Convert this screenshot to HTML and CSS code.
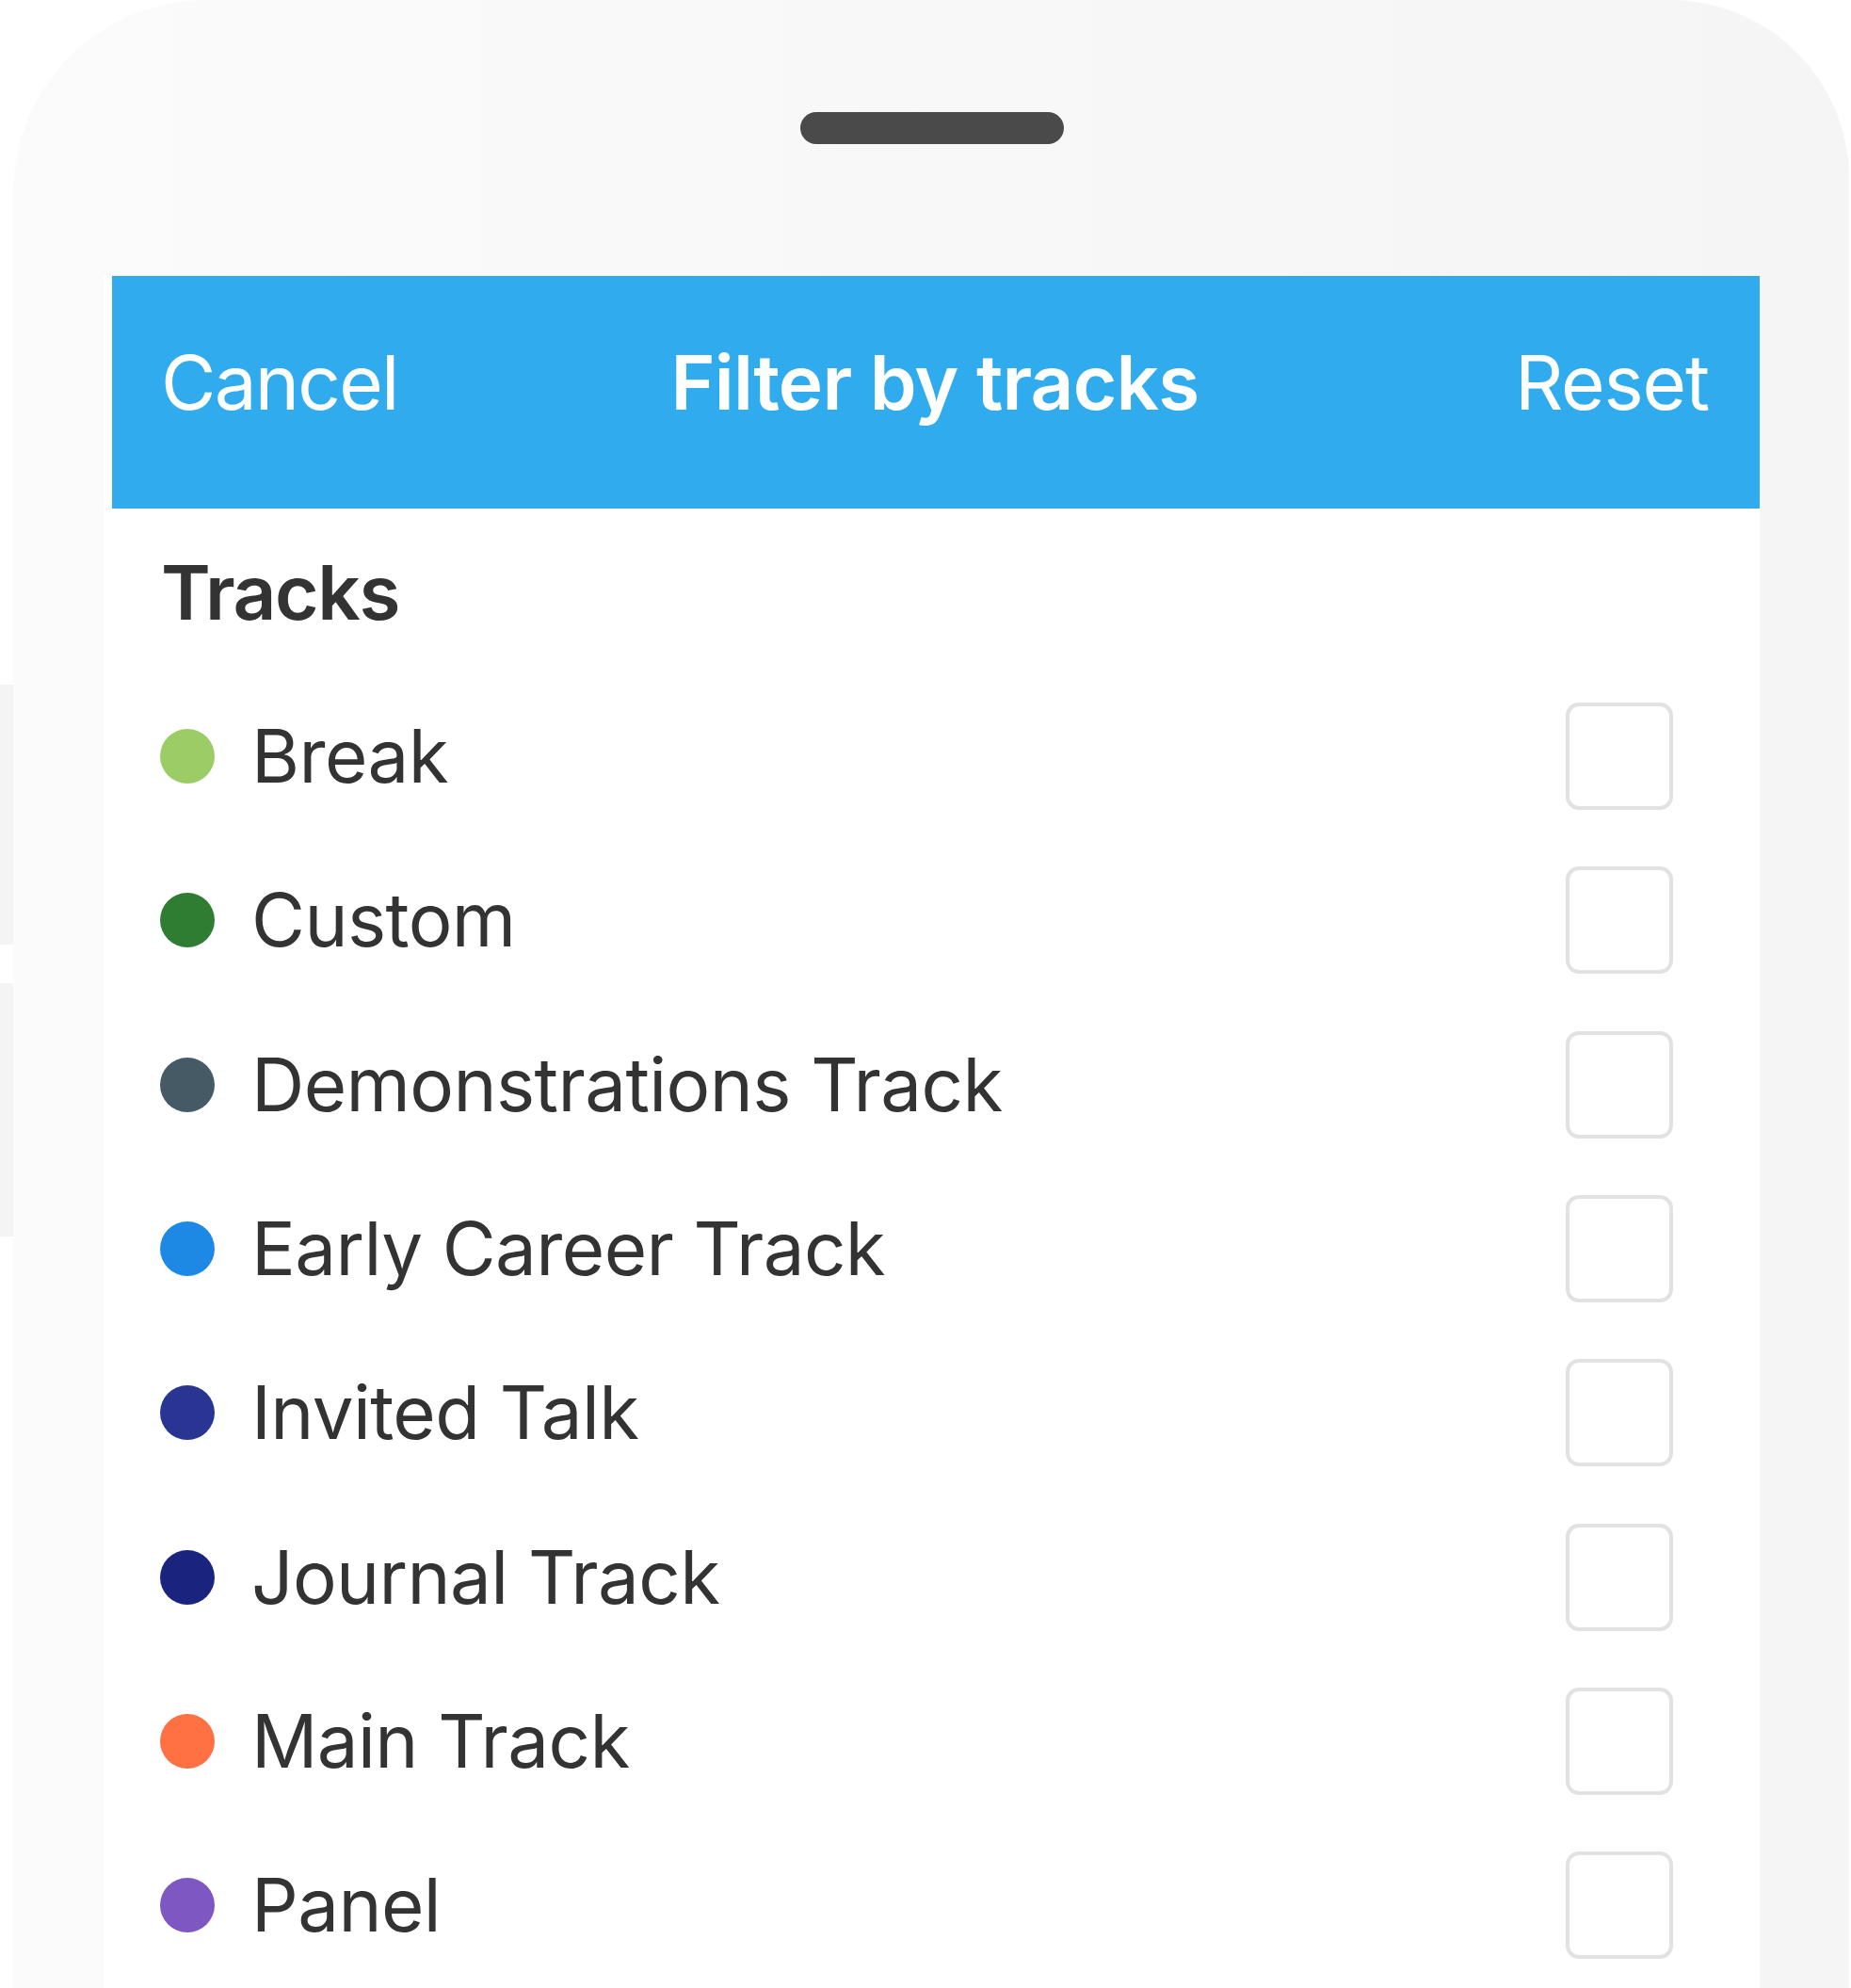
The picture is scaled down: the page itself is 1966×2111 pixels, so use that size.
FILE: index.html
```html
<!DOCTYPE html>
<html lang="en">

<head>
    <meta charset="UTF-8">
    <title>Filter by tracks</title>
    <link rel="stylesheet" href="styles.css">
</head>

<body>

    <!-- edges of the screens behind the phone -->
    <div class="behind behind-one"></div>
    <div class="behind behind-two"></div>

    <div class="phone">
        <div class="handle"></div>

        <div class="sheet">
            <div class="topbar">
                <span class="topbar-btn">Cancel</span>
                <span class="topbar-title">Filter by tracks</span>
                <span class="topbar-btn topbar-right">Reset</span>
            </div>

            <h2 class="section-title">Tracks</h2>

            <ul class="track-list">
                <li class="track">
                    <span class="dot dot-break"></span>
                    <span class="track-name">Break</span>
                    <span class="checkbox"></span>
                </li>
                <li class="track">
                    <span class="dot dot-custom"></span>
                    <span class="track-name">Custom</span>
                    <span class="checkbox"></span>
                </li>
                <li class="track">
                    <span class="dot dot-demo"></span>
                    <span class="track-name">Demonstrations Track</span>
                    <span class="checkbox"></span>
                </li>
                <li class="track">
                    <span class="dot dot-early"></span>
                    <span class="track-name">Early Career Track</span>
                    <span class="checkbox"></span>
                </li>
                <li class="track">
                    <span class="dot dot-invited"></span>
                    <span class="track-name">Invited Talk</span>
                    <span class="checkbox"></span>
                </li>
                <li class="track">
                    <span class="dot dot-journal"></span>
                    <span class="track-name">Journal Track</span>
                    <span class="checkbox"></span>
                </li>
                <li class="track">
                    <span class="dot dot-main"></span>
                    <span class="track-name">Main Track</span>
                    <span class="checkbox"></span>
                </li>
                <li class="track">
                    <span class="dot dot-panel"></span>
                    <span class="track-name">Panel</span>
                    <span class="checkbox"></span>
                </li>
            </ul>
        </div>
    </div>

</body>

</html>
```

FILE: styles.css
```css
body {
    font-family: 'Inter', 'Liberation Sans', sans-serif;
    background-color: #fff;
    margin: 0;
    padding: 0 2px 0 14px;
    height: 2111px;
    overflow: hidden;
    position: relative;
}

.behind {
    position: absolute;
    left: 0;
    width: 20px;
    background-color: #f4f4f4;
}

.behind-one {
    top: 727px;
    height: 276px;
}

.behind-two {
    top: 1044px;
    height: 269px;
}

.phone {
    position: relative;
    display: flex;
    flex-direction: column;
    height: 2111px;
    box-sizing: border-box;
    overflow: hidden;
    padding: 119px 95px 0 96px;
    background: linear-gradient(to right, #fbfbfb, #f5f5f5);
    border-radius: 205px 190px 0 0;
}

.handle {
    width: 280px;
    height: 34px;
    margin: 0 auto;
    border-radius: 17px;
    background-color: #4a4a4a;
}

.sheet {
    flex: 1;
    margin-top: 140px;
    background-color: #fff;
    overflow: hidden;
}

.topbar {
    display: grid;
    grid-template-columns: 1fr auto 1fr;
    align-items: center;
    height: 247px;
    box-sizing: border-box;
    margin-left: 9px;
    padding: 0 54px 22px 52px;
    background-color: #30abed;
    color: #fff;
    font-size: 80px;
    line-height: 1;
}

.topbar-btn {
    letter-spacing: -1.8px;
}

.topbar-right {
    text-align: right;
    letter-spacing: -1.2px;
}

.topbar-title {
    font-weight: 600;
    letter-spacing: -0.8px;
}

.section-title {
    margin: 49px 0 47px 0;
    padding-left: 61px;
    font-size: 80px;
    line-height: 1;
    font-weight: 600;
    letter-spacing: -1.4px;
    color: #333;
}

.track-list {
    list-style: none;
    margin: 0;
    padding: 0 92px 0 60px;
}

.track {
    display: flex;
    align-items: center;
    height: 174.3px;
}

.dot {
    width: 58px;
    height: 58px;
    border-radius: 50%;
    margin-right: 39px;
}

.dot-break { background-color: #9ccc65; }
.dot-custom { background-color: #2e7d32; }
.dot-demo { background-color: #455a64; }
.dot-early { background-color: #1e88e5; }
.dot-invited { background-color: #283593; }
.dot-journal { background-color: #1a237e; }
.dot-main { background-color: #ff7043; }
.dot-panel { background-color: #7e57c2; }

.track-name {
    flex: 1;
    font-size: 78px;
    line-height: 1;
    letter-spacing: -0.6px;
    color: #333;
}

.checkbox {
    width: 114px;
    height: 114px;
    box-sizing: border-box;
    border: 4px solid #e2e2e2;
    border-radius: 14px;
}
```
